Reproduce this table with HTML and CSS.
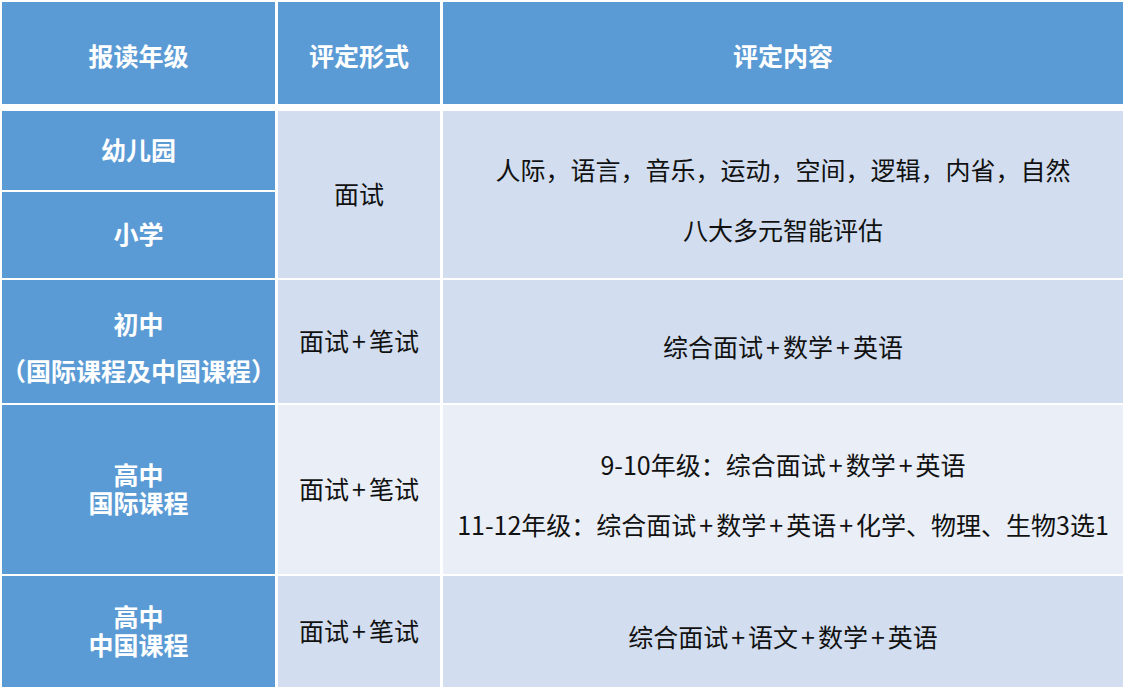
FILE: index.html
```html
<!DOCTYPE html>
<html lang="zh-CN">
<head>
<meta charset="utf-8">
<title>评定方式</title>
<link rel="stylesheet" href="styles.css">
</head>
<body>
<div class="sheet">
  <div class="grid head">
    <div class="hcell">报读年级</div>
    <div class="hcell">评定形式</div>
    <div class="hcell">评定内容</div>
  </div>
  <div class="grid body">
    <div class="grade"><span>幼儿园</span></div>
    <div class="form span2"><span>面试</span></div>
    <div class="content span2 dark">
      <p>人际，语言，音乐，运动，空间，逻辑，内省，自然</p>
      <p>八大多元智能评估</p>
    </div>
    <div class="grade"><span>小学</span></div>

    <div class="grade grade-wide"><span>初中</span><span>（国际课程及中国课程）</span></div>
    <div class="form"><span>面试<span class="plus">+</span>笔试</span></div>
    <div class="content dark"><p>综合面试<span class="plus">+</span>数学<span class="plus">+</span>英语</p></div>

    <div class="grade"><span>高中</span><span>国际课程</span></div>
    <div class="form light"><span>面试<span class="plus">+</span>笔试</span></div>
    <div class="content light">
      <p>9-10年级：综合面试<span class="plus">+</span>数学<span class="plus">+</span>英语</p>
      <p>11-12年级：综合面试<span class="plus">+</span>数学<span class="plus">+</span>英语<span class="plus">+</span>化学、物理、生物3选1</p>
    </div>

    <div class="grade"><span>高中</span><span>中国课程</span></div>
    <div class="form"><span>面试<span class="plus">+</span>笔试</span></div>
    <div class="content dark"><p>综合面试<span class="plus">+</span>语文<span class="plus">+</span>数学<span class="plus">+</span>英语</p></div>
  </div>
</div>
</body>
</html>
```

FILE: styles.css
```css
html, body {
  margin: 0;
  padding: 0;
  background: #ffffff;
}

body {
  font-family: "Microsoft YaHei", "Noto Sans CJK SC", "Noto Sans", sans-serif;
  font-size: 25px;
  color: #111111;
}

.sheet {
  padding: 2px 0 0 2px;
}

.grid {
  display: grid;
  grid-template-columns: 273px 162px 680px;
  column-gap: 3px;
}

.head {
  grid-template-rows: 102px;
  margin-bottom: 7px;
}

.body {
  grid-template-rows: 79px 86px 123px 169px 111px;
  row-gap: 2px;
}

.hcell {
  background: #5b9bd5;
  color: #ffffff;
  font-weight: 700;
  display: flex;
  align-items: center;
  justify-content: center;
  padding-top: 3px;
  box-sizing: border-box;
  line-height: 28px;
}

.grade {
  background: #5b9bd5;
  color: #ffffff;
  font-weight: 700;
  display: flex;
  flex-direction: column;
  align-items: center;
  justify-content: center;
  line-height: 28px;
  white-space: nowrap;
  padding-bottom: 4px;
  box-sizing: border-box;
}

.grade-wide {
  gap: 19px;
  padding-top: 9px;
  padding-bottom: 0;
}

.form {
  background: #d2deef;
  display: flex;
  align-items: center;
  justify-content: center;
  line-height: 30px;
  padding-bottom: 3px;
  box-sizing: border-box;
}

.span2 {
  grid-row: span 2;
}

.content {
  display: flex;
  flex-direction: column;
  align-items: center;
  justify-content: center;
  gap: 30px;
  padding-top: 9px;
  box-sizing: border-box;
  white-space: nowrap;
}

.content p {
  margin: 0;
  line-height: 30px;
}

.plus {
  margin: 0 3px;
}

.dark {
  background: #d2deef;
}

.light {
  background: #e9eef7;
}
```
